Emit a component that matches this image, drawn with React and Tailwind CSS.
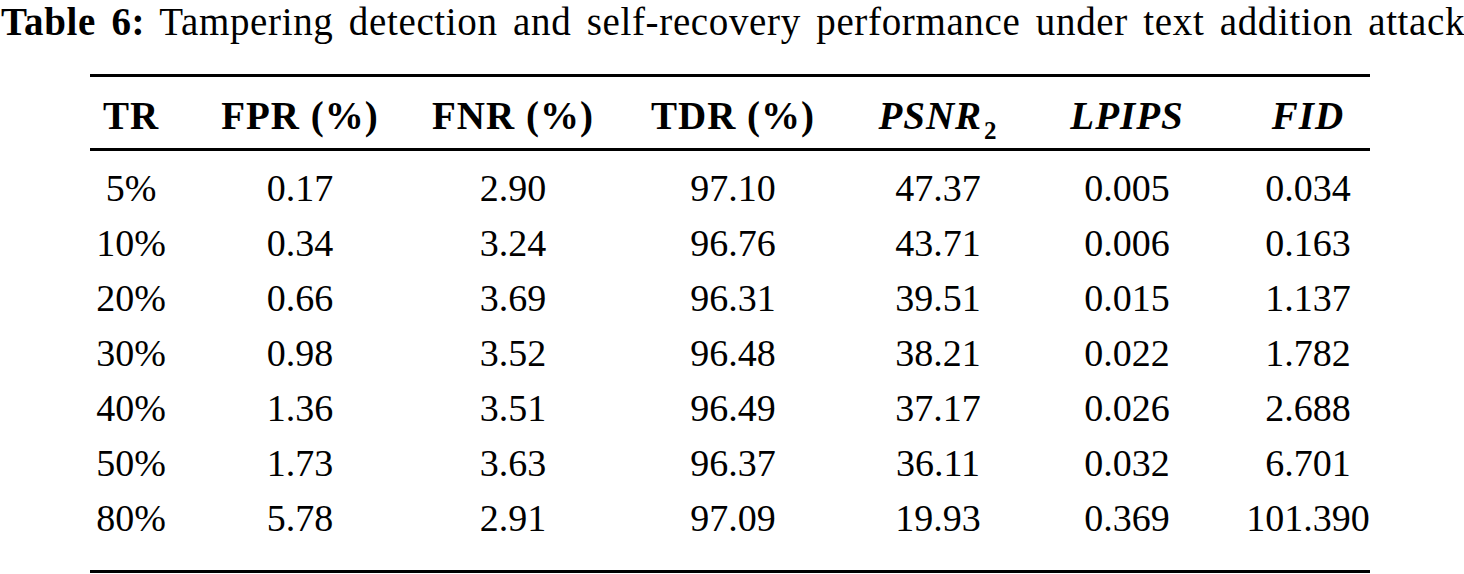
import React from 'react';

const widths = ['w-[82px]', 'w-[256px]', 'w-[170px]', 'w-[270px]', 'w-[140px]', 'w-[238px]', 'w-[124px]'];

const rows = [
  ['5%', '0.17', '2.90', '97.10', '47.37', '0.005', '0.034'],
  ['10%', '0.34', '3.24', '96.76', '43.71', '0.006', '0.163'],
  ['20%', '0.66', '3.69', '96.31', '39.51', '0.015', '1.137'],
  ['30%', '0.98', '3.52', '96.48', '38.21', '0.022', '1.782'],
  ['40%', '1.36', '3.51', '96.49', '37.17', '0.026', '2.688'],
  ['50%', '1.73', '3.63', '96.37', '36.11', '0.032', '6.701'],
  ['80%', '5.78', '2.91', '97.09', '19.93', '0.369', '101.390'],
];

const App = () => {
  const header = [
    <span className="font-bold">TR</span>,
    <span className="font-bold">FPR (%)</span>,
    <span className="font-bold">FNR (%)</span>,
    <span className="font-bold">TDR (%)</span>,
    <span className="font-bold italic">PSNR<sub className="not-italic text-[25px] align-[-4px] ml-[2px]">2</sub></span>,
    <span className="font-bold italic">LPIPS</span>,
    <span className="font-bold italic">FID</span>,
  ];

  return (
    <div className="w-[1464px] h-[574px] bg-white text-black font-['Liberation_Serif',serif] overflow-hidden">
      <div className="pl-[1px] text-[39px] leading-[43px] tracking-[0.65px] [word-spacing:5px] whitespace-nowrap">
        <span className="font-bold">Table 6:</span>
        <span className="ml-[14px]">Tampering detection and self-recovery performance under text addition attack</span>
      </div>

      <div className="ml-[90px] w-[1280px] mt-[31px] text-[38px]">
        <div className="border-t-[3px] border-black" />
        <div className="flex pt-[20px] pb-[13px] leading-[38px] text-[39px] tracking-[1px]">
          {header.map((h, i) => (
            <div key={i} className={`${widths[i]} text-center whitespace-nowrap`}>{h}</div>
          ))}
        </div>
        <div className="border-t-[3px] border-black" />
        <div className="pt-[10px] pb-[24px]">
          {rows.map((r, ri) => (
            <div key={ri} className="flex h-[55px] leading-[55px]">
              {r.map((c, ci) => (
                <div key={ci} className={`${widths[ci]} text-center whitespace-nowrap`}>{c}</div>
              ))}
            </div>
          ))}
        </div>
        <div className="border-t-[3px] border-black" />
      </div>
    </div>
  );
};

export default App;
